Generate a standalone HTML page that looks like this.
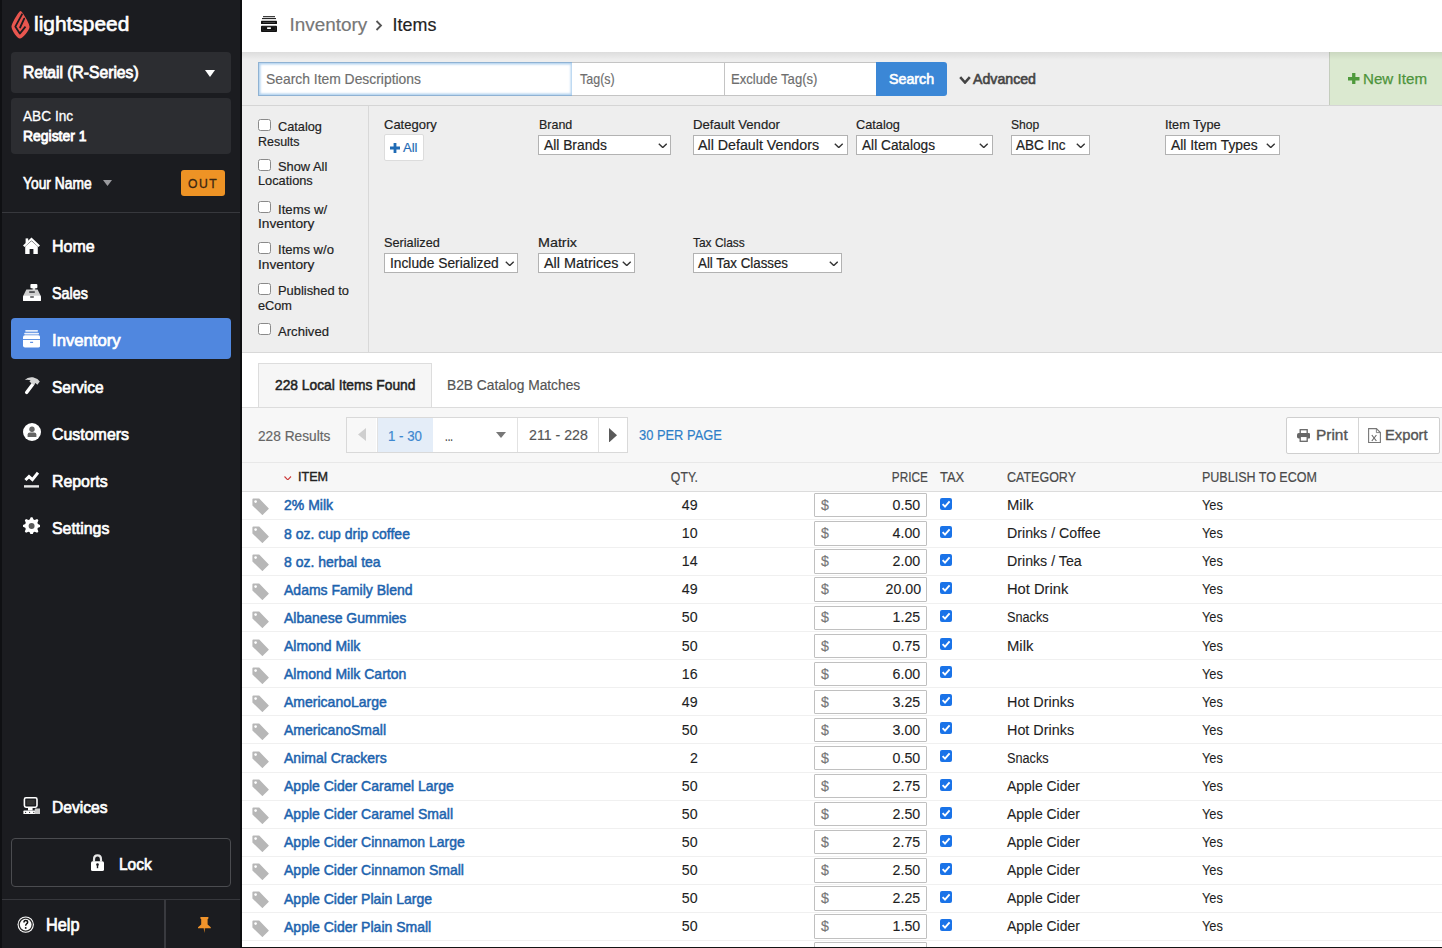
<!DOCTYPE html><html><head><meta charset="utf-8"><style>*{box-sizing:border-box;margin:0;padding:0}
html,body{width:1442px;height:948px;overflow:hidden;background:#fff;font-family:"Liberation Sans",sans-serif;color:#222}
.t{position:absolute;line-height:1;white-space:nowrap;-webkit-text-stroke:0.18px currentColor}
.b{position:absolute}
</style></head><body><div class="b" style="left:242.00px;top:0.00px;width:1200.00px;height:52.00px;background:#fff"></div>
<div class="b" style="left:242.00px;top:52.00px;width:1200.00px;height:54.00px;background:#eeeeee"></div>
<div class="b" style="left:242.00px;top:105.00px;width:1200.00px;height:1.00px;background:#d5d5d5"></div>
<div class="b" style="left:242.00px;top:106.00px;width:1200.00px;height:246.00px;background:#eeeeee"></div>
<div class="b" style="left:368.00px;top:106.00px;width:1.00px;height:246.00px;background:#d8d8d8"></div>
<div class="b" style="left:242.00px;top:352.00px;width:1200.00px;height:1.00px;background:#d8d8d8"></div>
<div class="b" style="left:242.00px;top:353.00px;width:1200.00px;height:55.00px;background:#fff"></div>
<div class="b" style="left:242.00px;top:407.00px;width:1200.00px;height:1.00px;background:#dddddd"></div>
<div class="b" style="left:242.00px;top:408.00px;width:1200.00px;height:54.00px;background:#f7f7f7"></div>
<div class="b" style="left:242.00px;top:462.00px;width:1200.00px;height:29.00px;background:#f7f7f7"></div>
<div class="b" style="left:242.00px;top:462.00px;width:1200.00px;height:1.00px;background:#e8e8e8"></div>
<div class="b" style="left:242.00px;top:490.60px;width:1200.00px;height:1.40px;background:#dcdcdc"></div>
<div class="b" style="left:0.00px;top:0.00px;width:242.00px;height:948.00px;background:#1b1c20"></div>
<div class="b" style="left:0.00px;top:0.00px;width:2.00px;height:948.00px;background:#0f1013"></div>
<div class="b" style="left:240.00px;top:0.00px;width:2.00px;height:948.00px;background:#0d0e10"></div>
<svg class="b" style="left:8.00px;top:8.00px" width="26" height="34" viewBox="0 0 26 34"><path d="M12.6 2.9 C14.2 3.2 21.6 15.2 21.6 18.8 C21.6 22.4 14.6 30.6 11.9 30.6 C9.2 30.6 3.5 22.4 3.5 18.8 C3.5 15.4 11 2.6 12.6 2.9 Z" fill="#e9564f"/><path d="M14.4 5.6 L7.3 18.6 L11.8 25.6 L17.5 18.6" fill="none" stroke="#1b1c20" stroke-width="1.8" stroke-linejoin="round"/><path d="M16.2 10.6 L12.1 19.5" fill="none" stroke="#1b1c20" stroke-width="1.8" stroke-linecap="round"/></svg>
<div class="t" style="left:33.70px;top:14.91px;font-size:19.48px;color:#fff;transform:scaleX(1.0733);transform-origin:left;-webkit-text-stroke:0.60px #fff;">lightspeed</div>
<div class="b" style="left:11.00px;top:52.00px;width:220.00px;height:41.00px;background:#2c2d31;border-radius:4px"></div>
<div class="t" style="left:23.30px;top:64.79px;font-size:15.84px;color:#fff;transform:scaleX(0.9882);transform-origin:left;-webkit-text-stroke:0.80px #fff;">Retail (R-Series)</div>
<svg class="b" style="left:205.00px;top:69.50px" width="10" height="7" viewBox="0 0 10 7"><path d="M0 0 H10 L5 7 Z" fill="#fff"/></svg>
<div class="b" style="left:11.00px;top:98.00px;width:220.00px;height:56.00px;background:#2c2d31;border-radius:4px"></div>
<div class="t" style="left:23.30px;top:108.65px;font-size:14.83px;color:#fff;transform:scaleX(0.9213);transform-origin:left;-webkit-text-stroke:0.30px #fff;">ABC Inc</div>
<div class="t" style="left:23.30px;top:129.23px;font-size:14.97px;color:#fff;transform:scaleX(0.9306);transform-origin:left;-webkit-text-stroke:0.90px #fff;">Register 1</div>
<div class="t" style="left:23.30px;top:175.59px;font-size:15.84px;color:#fff;transform:scaleX(0.8732);transform-origin:left;-webkit-text-stroke:0.67px #fff;">Your Name</div>
<svg class="b" style="left:102.50px;top:180.00px" width="9" height="6" viewBox="0 0 9 6"><path d="M0 0 H9 L4.5 6 Z" fill="#9a9a9e"/></svg>
<div class="b" style="left:181.00px;top:170.00px;width:44.00px;height:25.50px;background:#ee9325;border-radius:3px"></div>
<div class="t" style="left:188.00px;top:177.77px;font-size:12.79px;color:#3a2612;transform:scaleX(0.9503);transform-origin:left;-webkit-text-stroke:0.30px #3a2612;letter-spacing:1.6px;">OUT</div>
<div class="b" style="left:2.00px;top:211.60px;width:238.00px;height:1.60px;background:#37383d"></div>
<div class="b" style="left:11.00px;top:318.00px;width:219.60px;height:40.80px;background:#5087df;border-radius:4px"></div>
<div class="t" style="left:51.80px;top:238.36px;font-size:17.30px;color:#fff;transform:scaleX(0.9253);transform-origin:left;-webkit-text-stroke:0.73px #fff;">Home</div>
<div class="t" style="left:51.80px;top:285.26px;font-size:17.30px;color:#fff;transform:scaleX(0.8299);transform-origin:left;-webkit-text-stroke:0.73px #fff;">Sales</div>
<div class="t" style="left:51.80px;top:332.16px;font-size:17.30px;color:#fff;transform:scaleX(0.9643);transform-origin:left;-webkit-text-stroke:0.73px #fff;">Inventory</div>
<div class="t" style="left:51.80px;top:379.06px;font-size:17.30px;color:#fff;transform:scaleX(0.8963);transform-origin:left;-webkit-text-stroke:0.73px #fff;">Service</div>
<div class="t" style="left:51.80px;top:425.96px;font-size:17.30px;color:#fff;transform:scaleX(0.9219);transform-origin:left;-webkit-text-stroke:0.73px #fff;">Customers</div>
<div class="t" style="left:51.80px;top:472.86px;font-size:17.30px;color:#fff;transform:scaleX(0.9182);transform-origin:left;-webkit-text-stroke:0.73px #fff;">Reports</div>
<div class="t" style="left:51.80px;top:519.76px;font-size:17.30px;color:#fff;transform:scaleX(0.9185);transform-origin:left;-webkit-text-stroke:0.73px #fff;">Settings</div>
<div class="t" style="left:51.50px;top:798.86px;font-size:17.30px;color:#fff;transform:scaleX(0.9021);transform-origin:left;-webkit-text-stroke:0.73px #fff;">Devices</div>
<div class="b" style="left:11.00px;top:838.00px;width:220.00px;height:48.50px;border:1px solid #4b4c50;border-radius:4px"></div>
<div class="t" style="left:118.80px;top:855.96px;font-size:17.30px;color:#fff;transform:scaleX(0.8970);transform-origin:left;-webkit-text-stroke:0.73px #fff;">Lock</div>
<div class="b" style="left:2.00px;top:898.80px;width:238.00px;height:1.50px;background:#37383d"></div>
<div class="b" style="left:163.80px;top:900.00px;width:2.00px;height:48.00px;background:#393a3f"></div>
<div class="t" style="left:45.70px;top:917.29px;font-size:17.73px;color:#fff;transform:scaleX(0.9184);transform-origin:left;-webkit-text-stroke:0.74px #fff;">Help</div>
<svg class="b" style="left:22.80px;top:237.00px" width="17" height="17.2" viewBox="0 0 17 17.2"><path d="M8.5 0.6 L0 8.6 L1.5 10.1 L8.5 3.6 L15.5 10.1 L17 8.6 Z" fill="#fff"/><rect x="2.6" y="1.4" width="2.6" height="4.6" fill="#fff"/><path d="M2.2 9.4 L8.5 3.9 L14.8 9.4 V17.2 H10.4 V12 H6.6 V17.2 H2.2 Z" fill="#fff"/></svg>
<svg class="b" style="left:22.60px;top:283.60px" width="18" height="17.4" viewBox="0 0 18 17.4"><rect x="7.4" y="0" width="7" height="4.2" rx="1" fill="#fff"/><rect x="9.6" y="4" width="2.6" height="2" fill="#e0e0e0"/><path d="M3.4 5.6 H14.6 L17.6 11.4 H0.4 Z" fill="#cfcfcf"/><rect x="6.2" y="7.4" width="5.6" height="1.3" fill="#1b1c20"/><rect x="0" y="11.2" width="18" height="6.2" rx="1.2" fill="#fff"/><rect x="7.2" y="12.4" width="3.6" height="1.2" fill="#1b1c20"/></svg>
<svg class="b" style="left:23.00px;top:330.00px" width="17.2" height="17.5" viewBox="0 0 17.2 17.5"><rect x="2.2" y="0" width="12.8" height="1.7" rx="0.8" fill="#fff" opacity="0.85"/><rect x="1.2" y="2.8" width="14.8" height="1.7" rx="0.8" fill="#fff" opacity="0.9"/><rect x="0" y="5.2" width="17.2" height="12.3" rx="2" fill="#fff"/><rect x="0" y="9.1" width="17.2" height="0.9" fill="#5087df"/><rect x="7.1" y="11.8" width="3" height="1.1" fill="#5087df"/></svg>
<svg class="b" style="left:23.80px;top:377.30px" width="16" height="17.5" viewBox="0 0 16 17.5"><path d="M2.6 15.4 L8.8 7.2" stroke="#fff" stroke-width="3.3" stroke-linecap="round"/><path d="M0.8 3 Q3.6 -0.4 9 0.3 L13.4 2 L15.8 4.4 L13.4 7.8 L11.4 6 L9.8 8.2 L5.4 4.6 L6.6 3.3 Q3.8 2.4 0.8 3 Z" fill="#d4d4d4"/></svg>
<svg class="b" style="left:22.50px;top:423.20px" width="18" height="18" viewBox="0 0 18 18"><circle cx="9" cy="9" r="9" fill="#fff"/><circle cx="9" cy="6.2" r="2.7" fill="#666"/><path d="M4.6 14 V11.6 Q4.6 9.4 7 9.4 H11 Q13.4 9.4 13.4 11.6 V14 Z" fill="#666"/></svg>
<svg class="b" style="left:23.80px;top:471.30px" width="15.4" height="17.2" viewBox="0 0 15.4 17.2"><path d="M1.4 9 L5 5.6 L8.4 8.6 L14 1.6" fill="none" stroke="#fff" stroke-width="3" stroke-linejoin="miter"/><rect x="0" y="14.2" width="15.4" height="2.4" fill="#e8e8e8"/></svg>
<svg class="b" style="left:22.50px;top:516.60px" width="17.2" height="17.8" viewBox="0 0 17.2 17.8"><path d="M17.36 8.04 L17.36 9.76 L14.92 10.82 L14.42 12.01 L15.40 14.48 L14.18 15.70 L11.71 14.72 L10.52 15.22 L9.46 17.66 L7.74 17.66 L6.68 15.22 L5.49 14.72 L3.02 15.70 L1.80 14.48 L2.78 12.01 L2.28 10.82 L-0.16 9.76 L-0.16 8.04 L2.28 6.98 L2.78 5.79 L1.80 3.32 L3.02 2.10 L5.49 3.08 L6.68 2.58 L7.74 0.14 L9.46 0.14 L10.52 2.58 L11.71 3.08 L14.18 2.10 L15.40 3.32 L14.42 5.79 L14.92 6.98 Z" fill="#fff"/><circle cx="8.6" cy="8.9" r="3" fill="#5a5a5a"/></svg>
<svg class="b" style="left:22.60px;top:796.80px" width="17.6" height="17.6" viewBox="0 0 17.6 17.6"><rect x="1.4" y="0.8" width="12.6" height="9.4" rx="1.6" fill="none" stroke="#fff" stroke-width="1.6"/><rect x="3.6" y="3" width="8.2" height="5" fill="#333"/><rect x="5" y="10" width="4.6" height="3.4" fill="#fff"/><rect x="0.4" y="13.6" width="12.4" height="3.8" rx="0.6" fill="#fff"/><rect x="11.8" y="11.6" width="5.6" height="5.8" rx="0.6" fill="#ccc"/><circle cx="2.6" cy="15.4" r="0.6" fill="#333"/><circle cx="6.6" cy="15.4" r="0.6" fill="#333"/><circle cx="10.8" cy="15.4" r="0.6" fill="#333"/></svg>
<svg class="b" style="left:91.30px;top:854.00px" width="13" height="17" viewBox="0 0 13 17"><path d="M3 7.6 V5.4 Q3 1.4 6.5 1.4 Q10 1.4 10 5.4 V7.6" fill="none" stroke="#e6e6e6" stroke-width="2.2"/><rect x="0" y="7.2" width="13" height="9.8" rx="1.6" fill="#fff"/><circle cx="6.5" cy="10.6" r="1.3" fill="#1b1c20"/><rect x="5.8" y="10.8" width="1.4" height="3.4" fill="#1b1c20"/></svg>
<svg class="b" style="left:16.60px;top:915.80px" width="17.4" height="17.2" viewBox="0 0 17.4 17.2"><circle cx="8.7" cy="8.6" r="8.2" fill="#fff"/><circle cx="8.7" cy="8.6" r="6.5" fill="none" stroke="#2a2a2a" stroke-width="1.3"/><path d="M6.2 6.6 Q6.2 3.8 8.8 3.8 Q11.4 3.8 11.4 6.3 Q11.4 7.6 10 8.4 Q9.4 8.8 9.4 9.8 H8 Q8 8.2 9 7.5 Q9.9 6.9 9.9 6.3 Q9.9 5.2 8.8 5.2 Q7.7 5.2 7.7 6.6 Z" fill="#111"/><circle cx="8.7" cy="11.9" r="0.95" fill="#111"/></svg>
<svg class="b" style="left:197.90px;top:917.40px" width="12.8" height="16" viewBox="0 0 12.8 16"><path d="M2.4 0 H10.4 V1.6 L9.6 2.2 V7.4 L12.8 10.2 V11.2 H0 V10.2 L3.2 7.4 V2.2 L2.4 1.6 Z" fill="#f0932b"/><path d="M5.6 11 H7.2 L6.4 16 Z" fill="#c77a22"/></svg>
<svg class="b" style="left:261.20px;top:15.90px" width="16" height="16.2" viewBox="0 0 16 16.2"><rect x="2" y="0.2" width="12" height="1" fill="#111"/><rect x="1" y="2.1" width="14" height="1" fill="#111"/><rect x="0" y="4.8" width="16" height="3.2" rx="0.6" fill="#111"/><rect x="0" y="9.8" width="16" height="6.2" rx="0.8" fill="#111"/><rect x="6" y="11.3" width="4" height="1.6" rx="0.6" fill="#fff"/><rect x="1.8" y="6.1" width="12.4" height="0.6" fill="#666"/><rect x="1.9" y="10.9" width="12.2" height="3.9" fill="none" stroke="#444" stroke-width="0.4"/></svg>
<div class="t" style="left:289.60px;top:15.90px;font-size:18.9px;color:#777;font-weight:normal;">Inventory</div>
<svg class="b" style="left:375.00px;top:19.50px" width="8" height="11" viewBox="0 0 8 11"><path d="M1.5 1 L6 5.5 L1.5 10" fill="none" stroke="#555" stroke-width="1.8"/></svg>
<div class="t" style="left:392.60px;top:16.75px;font-size:17.9px;color:#222;font-weight:normal;">Items</div>
<div class="b" style="left:257.50px;top:62.00px;width:315.50px;height:34.20px;background:#fff;border:1px solid #8fb2d3;box-shadow:inset 0 0 2px 1.5px #b3d3f0"></div>
<div class="t" style="left:266.00px;top:71.10px;font-size:15.12px;color:#6e6e6e;transform:scaleX(0.9179);transform-origin:left;">Search Item Descriptions</div>
<div class="b" style="left:572.00px;top:62.00px;width:153.00px;height:34.20px;background:#fff;border:1px solid #c4c4c4;border-left:none"></div>
<div class="t" style="left:579.80px;top:70.90px;font-size:15.12px;color:#6e6e6e;transform:scaleX(0.8263);transform-origin:left;">Tag(s)</div>
<div class="b" style="left:724.00px;top:62.00px;width:153.00px;height:34.20px;background:#fff;border:1px solid #c4c4c4"></div>
<div class="t" style="left:731.00px;top:70.90px;font-size:15.12px;color:#6e6e6e;transform:scaleX(0.8675);transform-origin:left;">Exclude Tag(s)</div>
<div class="b" style="left:876.00px;top:62.00px;width:71.00px;height:34.20px;background:#3b87d6;border-radius:0 3px 3px 0"></div>
<div class="t" style="left:888.60px;top:71.48px;font-size:15.26px;color:#fff;transform:scaleX(0.9349);transform-origin:left;-webkit-text-stroke:0.64px #fff;">Search</div>
<svg class="b" style="left:959.40px;top:75.50px" width="12" height="8.5" viewBox="0 0 12 8.5"><path d="M1.2 1.2 L6 6.5 L10.8 1.2" fill="none" stroke="#444" stroke-width="2.6"/></svg>
<div class="t" style="left:973.20px;top:71.63px;font-size:14.97px;color:#444;transform:scaleX(0.9461);transform-origin:left;-webkit-text-stroke:0.63px #444;">Advanced</div>
<div class="b" style="left:1329.00px;top:52.00px;width:113.00px;height:53.50px;background:#dbe9d0;border-left:1px solid #c4cdbd"></div>
<div class="b" style="left:242.00px;top:52.00px;width:1200.00px;height:8.00px;background:linear-gradient(rgba(0,0,0,0.075),rgba(0,0,0,0))"></div>
<div class="b" style="left:242.00px;top:105.00px;width:1200.00px;height:1.00px;background:#d5d5d5"></div>
<div class="t" style="left:1363.20px;top:70.76px;font-size:15.41px;color:#4d943b;transform:scaleX(0.9837);transform-origin:left;-webkit-text-stroke:0.25px #4d943b;">New Item</div>
<svg class="b" style="left:1348.00px;top:72.60px" width="11.5" height="11.5" viewBox="0 0 11.5 11.5"><path d="M4.1 0 H7.4 V4.1 H11.5 V7.4 H7.4 V11.5 H4.1 V7.4 H0 V4.1 H4.1 Z" fill="#4f9a3c"/></svg>
<div class="t" style="left:384.40px;top:117.73px;font-size:13.2px;color:#222;font-weight:normal;transform:scaleX(0.9857);transform-origin:left;">Category</div>
<div class="t" style="left:539.10px;top:117.73px;font-size:13.2px;color:#222;font-weight:normal;transform:scaleX(0.9455);transform-origin:left;">Brand</div>
<div class="t" style="left:693.20px;top:117.73px;font-size:13.2px;color:#222;font-weight:normal;transform:scaleX(0.9962);transform-origin:left;">Default Vendor</div>
<div class="t" style="left:856.20px;top:117.73px;font-size:13.2px;color:#222;font-weight:normal;transform:scaleX(0.9670);transform-origin:left;">Catalog</div>
<div class="t" style="left:1010.70px;top:117.73px;font-size:13.2px;color:#222;font-weight:normal;transform:scaleX(0.9182);transform-origin:left;">Shop</div>
<div class="t" style="left:1165.40px;top:117.73px;font-size:13.2px;color:#222;font-weight:normal;transform:scaleX(0.9649);transform-origin:left;">Item Type</div>
<div class="b" style="left:384.40px;top:134.40px;width:39.30px;height:26.20px;background:#fff;border:1px solid #dcdcdc;border-radius:2px"></div>
<svg class="b" style="left:390.00px;top:142.80px" width="10" height="10" viewBox="0 0 10 10"><path d="M3.6 0 H6.4 V3.6 H10 V6.4 H6.4 V10 H3.6 V6.4 H0 V3.6 H3.6 Z" fill="#1f6bb5"/></svg>
<div class="t" style="left:402.80px;top:141.17px;font-size:13.5px;color:#1f6bb5;font-weight:normal;transform:scaleX(0.9668);transform-origin:left;">All</div>
<div class="b" style="left:538.20px;top:135.30px;width:133.20px;height:19.70px;background:#fff;border:1px solid #b2b2b2"></div>
<div class="t" style="left:543.50px;top:138.05px;font-size:14px;color:#222;font-weight:normal;transform:scaleX(0.9857);transform-origin:left;">All Brands</div>
<svg class="b" style="left:657.90px;top:142.90px" width="9.5" height="5.5" viewBox="0 0 9.5 5.5"><path d="M0.8 0.8 L4.75 4.6 L8.7 0.8" fill="none" stroke="#333" stroke-width="1.35"/></svg>
<div class="b" style="left:693.00px;top:135.30px;width:154.60px;height:19.70px;background:#fff;border:1px solid #b2b2b2"></div>
<div class="t" style="left:698.30px;top:138.05px;font-size:14px;color:#222;font-weight:normal;transform:scaleX(1.0162);transform-origin:left;">All Default Vendors</div>
<svg class="b" style="left:834.10px;top:142.90px" width="9.5" height="5.5" viewBox="0 0 9.5 5.5"><path d="M0.8 0.8 L4.75 4.6 L8.7 0.8" fill="none" stroke="#333" stroke-width="1.35"/></svg>
<div class="b" style="left:856.20px;top:135.30px;width:136.40px;height:19.70px;background:#fff;border:1px solid #b2b2b2"></div>
<div class="t" style="left:861.50px;top:138.05px;font-size:14px;color:#222;font-weight:normal;transform:scaleX(0.9772);transform-origin:left;">All Catalogs</div>
<svg class="b" style="left:979.10px;top:142.90px" width="9.5" height="5.5" viewBox="0 0 9.5 5.5"><path d="M0.8 0.8 L4.75 4.6 L8.7 0.8" fill="none" stroke="#333" stroke-width="1.35"/></svg>
<div class="b" style="left:1010.70px;top:135.30px;width:79.00px;height:19.70px;background:#fff;border:1px solid #b2b2b2"></div>
<div class="t" style="left:1016.00px;top:138.05px;font-size:14px;color:#222;font-weight:normal;transform:scaleX(0.9659);transform-origin:left;">ABC Inc</div>
<svg class="b" style="left:1076.20px;top:142.90px" width="9.5" height="5.5" viewBox="0 0 9.5 5.5"><path d="M0.8 0.8 L4.75 4.6 L8.7 0.8" fill="none" stroke="#333" stroke-width="1.35"/></svg>
<div class="b" style="left:1165.40px;top:135.30px;width:114.20px;height:19.70px;background:#fff;border:1px solid #b2b2b2"></div>
<div class="t" style="left:1170.70px;top:138.05px;font-size:14px;color:#222;font-weight:normal;transform:scaleX(0.9878);transform-origin:left;">All Item Types</div>
<svg class="b" style="left:1266.10px;top:142.90px" width="9.5" height="5.5" viewBox="0 0 9.5 5.5"><path d="M0.8 0.8 L4.75 4.6 L8.7 0.8" fill="none" stroke="#333" stroke-width="1.35"/></svg>
<div class="t" style="left:384.20px;top:235.63px;font-size:13.2px;color:#222;font-weight:normal;transform:scaleX(0.9627);transform-origin:left;">Serialized</div>
<div class="t" style="left:538.20px;top:235.63px;font-size:13.2px;color:#222;font-weight:normal;transform:scaleX(1.0854);transform-origin:left;">Matrix</div>
<div class="t" style="left:693.20px;top:235.63px;font-size:13.2px;color:#222;font-weight:normal;transform:scaleX(0.9055);transform-origin:left;">Tax Class</div>
<div class="b" style="left:384.20px;top:253.20px;width:134.30px;height:19.70px;background:#fff;border:1px solid #b2b2b2"></div>
<div class="t" style="left:389.50px;top:255.95px;font-size:14px;color:#222;font-weight:normal;transform:scaleX(0.9836);transform-origin:left;">Include Serialized</div>
<svg class="b" style="left:505.00px;top:260.80px" width="9.5" height="5.5" viewBox="0 0 9.5 5.5"><path d="M0.8 0.8 L4.75 4.6 L8.7 0.8" fill="none" stroke="#333" stroke-width="1.35"/></svg>
<div class="b" style="left:538.20px;top:253.20px;width:97.30px;height:19.70px;background:#fff;border:1px solid #b2b2b2"></div>
<div class="t" style="left:543.50px;top:255.95px;font-size:14px;color:#222;font-weight:normal;transform:scaleX(1.0283);transform-origin:left;">All Matrices</div>
<svg class="b" style="left:622.00px;top:260.80px" width="9.5" height="5.5" viewBox="0 0 9.5 5.5"><path d="M0.8 0.8 L4.75 4.6 L8.7 0.8" fill="none" stroke="#333" stroke-width="1.35"/></svg>
<div class="b" style="left:693.00px;top:253.20px;width:149.00px;height:19.70px;background:#fff;border:1px solid #b2b2b2"></div>
<div class="t" style="left:698.30px;top:255.95px;font-size:14px;color:#222;font-weight:normal;transform:scaleX(0.9507);transform-origin:left;">All Tax Classes</div>
<svg class="b" style="left:828.50px;top:260.80px" width="9.5" height="5.5" viewBox="0 0 9.5 5.5"><path d="M0.8 0.8 L4.75 4.6 L8.7 0.8" fill="none" stroke="#333" stroke-width="1.35"/></svg>
<div class="b" style="left:258.30px;top:118.90px;width:12.40px;height:12.20px;background:#fff;border:1px solid #8a8a8a;border-radius:2.5px"></div>
<div class="t" style="left:277.50px;top:120.23px;font-size:13.2px;color:#222;font-weight:normal;transform:scaleX(0.9670);transform-origin:left;">Catalog</div>
<div class="t" style="left:257.80px;top:134.53px;font-size:13.2px;color:#222;font-weight:normal;transform:scaleX(0.9453);transform-origin:left;">Results</div>
<div class="b" style="left:258.30px;top:158.80px;width:12.40px;height:12.20px;background:#fff;border:1px solid #8a8a8a;border-radius:2.5px"></div>
<div class="t" style="left:277.50px;top:160.13px;font-size:13.2px;color:#222;font-weight:normal;transform:scaleX(0.9739);transform-origin:left;">Show All</div>
<div class="t" style="left:257.80px;top:174.43px;font-size:13.2px;color:#222;font-weight:normal;transform:scaleX(0.9698);transform-origin:left;">Locations</div>
<div class="b" style="left:258.30px;top:201.20px;width:12.40px;height:12.20px;background:#fff;border:1px solid #8a8a8a;border-radius:2.5px"></div>
<div class="t" style="left:277.50px;top:202.53px;font-size:13.2px;color:#222;font-weight:normal;transform:scaleX(1.0011);transform-origin:left;">Items w/</div>
<div class="t" style="left:257.80px;top:216.83px;font-size:13.2px;color:#222;font-weight:normal;transform:scaleX(1.0407);transform-origin:left;">Inventory</div>
<div class="b" style="left:258.30px;top:242.00px;width:12.40px;height:12.20px;background:#fff;border:1px solid #8a8a8a;border-radius:2.5px"></div>
<div class="t" style="left:277.50px;top:243.33px;font-size:13.2px;color:#222;font-weight:normal;transform:scaleX(0.9915);transform-origin:left;">Items w/o</div>
<div class="t" style="left:257.80px;top:257.63px;font-size:13.2px;color:#222;font-weight:normal;transform:scaleX(1.0407);transform-origin:left;">Inventory</div>
<div class="b" style="left:258.30px;top:283.10px;width:12.40px;height:12.20px;background:#fff;border:1px solid #8a8a8a;border-radius:2.5px"></div>
<div class="t" style="left:277.50px;top:284.43px;font-size:13.2px;color:#222;font-weight:normal;transform:scaleX(0.9773);transform-origin:left;">Published to</div>
<div class="t" style="left:257.80px;top:298.73px;font-size:13.2px;color:#222;font-weight:normal;transform:scaleX(0.9654);transform-origin:left;">eCom</div>
<div class="b" style="left:258.30px;top:323.30px;width:12.40px;height:12.20px;background:#fff;border:1px solid #8a8a8a;border-radius:2.5px"></div>
<div class="t" style="left:277.50px;top:324.63px;font-size:13.2px;color:#222;font-weight:normal;transform:scaleX(0.9930);transform-origin:left;">Archived</div>
<div class="b" style="left:258.10px;top:363.30px;width:173.60px;height:44.70px;background:#f6f6f6;border:1px solid #dddddd;border-bottom:none"></div>
<div class="b" style="left:242.00px;top:406.80px;width:1200.00px;height:1.20px;background:#dcdcdc"></div>
<div class="t" style="left:274.50px;top:377.90px;font-size:14.53px;color:#222;transform:scaleX(0.9509);transform-origin:left;-webkit-text-stroke:0.50px #222;">228 Local Items Found</div>
<div class="t" style="left:447.40px;top:377.90px;font-size:14.53px;color:#555;transform:scaleX(0.9489);transform-origin:left;">B2B Catalog Matches</div>
<div class="t" style="left:258.10px;top:428.55px;font-size:14px;color:#666;font-weight:normal;transform:scaleX(0.9793);transform-origin:left;">228 Results</div>
<div class="b" style="left:346.40px;top:417.40px;width:282.00px;height:36.10px;background:#fff;border:1px solid #d9d9d9"></div>
<div class="b" style="left:347.40px;top:418.40px;width:29.10px;height:34.10px;background:#f8f8f8"></div>
<div class="b" style="left:376.50px;top:418.40px;width:1.00px;height:34.10px;background:#e2e2e2"></div>
<div class="b" style="left:377.50px;top:418.40px;width:55.10px;height:34.10px;background:#e4edf8"></div>
<svg class="b" style="left:358.20px;top:428.20px" width="8" height="13" viewBox="0 0 8 13"><path d="M8 0 V13 L0 6.5 Z" fill="#cfcfcf"/></svg>
<div class="t" style="left:388.10px;top:428.55px;font-size:14px;color:#3e88d0;font-weight:normal;transform:scaleX(0.9498);transform-origin:left;">1 - 30</div>
<div class="t" style="left:445.40px;top:428.55px;font-size:14px;color:#333;font-weight:normal;transform:scaleX(0.6860);transform-origin:left;">...</div>
<svg class="b" style="left:496.00px;top:431.50px" width="10" height="6" viewBox="0 0 10 6"><path d="M0 0 H10 L5 6 Z" fill="#777"/></svg>
<div class="b" style="left:517.00px;top:418.40px;width:1.00px;height:34.10px;background:#e2e2e2"></div>
<div class="t" style="left:528.50px;top:427.75px;font-size:14px;color:#555;font-weight:normal;transform:scaleX(1.0118);transform-origin:left;">211 - 228</div>
<div class="b" style="left:598.00px;top:418.40px;width:1.00px;height:34.10px;background:#e2e2e2"></div>
<svg class="b" style="left:608.90px;top:427.50px" width="8" height="14.5" viewBox="0 0 8 14.5"><path d="M0 0 V14.5 L8 7.25 Z" fill="#5a5a5a"/></svg>
<div class="t" style="left:638.50px;top:427.55px;font-size:14px;color:#2f7fc8;font-weight:normal;transform:scaleX(0.9210);transform-origin:left;">30 PER PAGE</div>
<div class="b" style="left:1286.00px;top:417.00px;width:153.80px;height:36.60px;background:#fff;border:1px solid #cfcfcf;border-radius:2px"></div>
<div class="b" style="left:1358.00px;top:418.00px;width:1.00px;height:35.00px;background:#d5d5d5"></div>
<div class="t" style="left:1315.80px;top:427.65px;font-size:14.83px;color:#555;transform:scaleX(1.0400);transform-origin:left;-webkit-text-stroke:0.35px #555;">Print</div>
<div class="t" style="left:1385.40px;top:427.65px;font-size:14.83px;color:#555;transform:scaleX(0.9943);transform-origin:left;-webkit-text-stroke:0.35px #555;">Export</div>
<svg class="b" style="left:1297.00px;top:428.80px" width="13.4" height="13" viewBox="0 0 13.4 13"><rect x="3.2" y="0.7" width="7" height="4" fill="none" stroke="#666" stroke-width="1.3"/><rect x="0" y="4" width="13.4" height="5.6" rx="1.8" fill="#666"/><rect x="3.2" y="7.4" width="7" height="4.9" fill="#fff" stroke="#666" stroke-width="1.3"/></svg>
<svg class="b" style="left:1368.00px;top:427.80px" width="13" height="15.2" viewBox="0 0 13 15.2"><path d="M0.6 0.6 H8.4 L12.4 4.6 V14.6 H0.6 Z" fill="none" stroke="#777" stroke-width="1.1"/><path d="M8.4 0.6 V4.6 H12.4" fill="none" stroke="#777" stroke-width="0.9"/><path d="M3.8 7 L8.4 13 M8.4 7 L3.8 13" stroke="#666" stroke-width="1.1"/></svg>
<svg class="b" style="left:284.00px;top:475.50px" width="7.5" height="4.5" viewBox="0 0 7.5 4.5"><path d="M0.5 0.5 L3.75 3.9 L7 0.5" fill="none" stroke="#cc3b3b" stroke-width="1.1"/></svg>
<div class="t" style="left:297.80px;top:470.46px;font-size:13.52px;color:#222;transform:scaleX(0.9321);transform-origin:left;-webkit-text-stroke:0.40px #222;">ITEM</div>
<div class="t" style="right:743.80px;top:470.05px;font-size:14px;color:#4a4a4a;font-weight:normal;transform:scaleX(0.8746);transform-origin:right;">QTY.</div>
<div class="t" style="right:514.50px;top:470.05px;font-size:14px;color:#4a4a4a;font-weight:normal;transform:scaleX(0.8414);transform-origin:right;">PRICE</div>
<div class="t" style="left:940.20px;top:470.05px;font-size:14px;color:#4a4a4a;font-weight:normal;transform:scaleX(0.9239);transform-origin:left;">TAX</div>
<div class="t" style="left:1007.20px;top:470.05px;font-size:14px;color:#4a4a4a;font-weight:normal;transform:scaleX(0.8929);transform-origin:left;">CATEGORY</div>
<div class="t" style="left:1202.30px;top:470.05px;font-size:14px;color:#4a4a4a;font-weight:normal;transform:scaleX(0.8932);transform-origin:left;">PUBLISH TO ECOM</div>
<div class="b" style="left:242.00px;top:518.78px;width:1200.00px;height:1.00px;background:#f0f0f0"></div>
<svg class="b" style="left:252.00px;top:498.30px" width="17.4" height="17.6" viewBox="0 0 17.4 17.6"><path d="M0.4 1.6 Q0.4 0.6 1.4 0.6 H7.2 L16.6 10.2 Q17 10.6 16.6 11 L10.8 16.8 Q10.4 17.2 10 16.8 L0.4 7.4 Z" fill="#b7b7b7"/><circle cx="3.6" cy="3.6" r="1.3" fill="#fff"/></svg>
<div class="t" style="left:283.60px;top:498.44px;font-size:14.6px;color:#1c63ae;font-weight:normal;transform:scaleX(0.9603);transform-origin:left;-webkit-text-stroke:0.5px #1c63ae">2% Milk</div>
<div class="t" style="right:744.70px;top:498.15px;font-size:14px;color:#1e1e1e;font-weight:normal;transform:scaleX(1.0138);transform-origin:right;-webkit-text-stroke:0.1px #1e1e1e">49</div>
<div class="t" style="left:1007.20px;top:498.15px;font-size:14px;color:#1e1e1e;font-weight:normal;transform:scaleX(1.0600);transform-origin:left;-webkit-text-stroke:0.1px #1e1e1e">Milk</div>
<div class="t" style="left:1201.80px;top:498.15px;font-size:14px;color:#1e1e1e;font-weight:normal;transform:scaleX(0.9109);transform-origin:left;-webkit-text-stroke:0.1px #1e1e1e">Yes</div>
<div class="b" style="left:814.30px;top:493.20px;width:113.10px;height:24.30px;background:#fff;border:1px solid #c0c0c0;border-radius:1px"></div>
<div class="t" style="left:820.60px;top:498.15px;font-size:14px;color:#777;font-weight:normal;transform:scaleX(1.0138);transform-origin:left;">$</div>
<div class="t" style="right:521.30px;top:498.15px;font-size:14px;color:#1e1e1e;font-weight:normal;transform:scaleX(1.0138);transform-origin:right;-webkit-text-stroke:0.1px #1e1e1e">0.50</div>
<svg class="b" style="left:940.00px;top:497.70px" width="12" height="12" viewBox="0 0 12 12"><rect x="0" y="0" width="12" height="12" rx="2" fill="#1a73e8"/><path d="M2.6 6.2 L5 8.6 L9.6 3.4" fill="none" stroke="#fff" stroke-width="1.9"/></svg>
<div class="b" style="left:242.00px;top:546.86px;width:1200.00px;height:1.00px;background:#f0f0f0"></div>
<svg class="b" style="left:252.00px;top:526.38px" width="17.4" height="17.6" viewBox="0 0 17.4 17.6"><path d="M0.4 1.6 Q0.4 0.6 1.4 0.6 H7.2 L16.6 10.2 Q17 10.6 16.6 11 L10.8 16.8 Q10.4 17.2 10 16.8 L0.4 7.4 Z" fill="#b7b7b7"/><circle cx="3.6" cy="3.6" r="1.3" fill="#fff"/></svg>
<div class="t" style="left:283.60px;top:526.52px;font-size:14.6px;color:#1c63ae;font-weight:normal;transform:scaleX(0.9603);transform-origin:left;-webkit-text-stroke:0.5px #1c63ae">8 oz. cup drip coffee</div>
<div class="t" style="right:744.70px;top:526.23px;font-size:14px;color:#1e1e1e;font-weight:normal;transform:scaleX(1.0138);transform-origin:right;-webkit-text-stroke:0.1px #1e1e1e">10</div>
<div class="t" style="left:1007.20px;top:526.23px;font-size:14px;color:#1e1e1e;font-weight:normal;transform:scaleX(1.0138);transform-origin:left;-webkit-text-stroke:0.1px #1e1e1e">Drinks / Coffee</div>
<div class="t" style="left:1201.80px;top:526.23px;font-size:14px;color:#1e1e1e;font-weight:normal;transform:scaleX(0.9109);transform-origin:left;-webkit-text-stroke:0.1px #1e1e1e">Yes</div>
<div class="b" style="left:814.30px;top:521.28px;width:113.10px;height:24.30px;background:#fff;border:1px solid #c0c0c0;border-radius:1px"></div>
<div class="t" style="left:820.60px;top:526.23px;font-size:14px;color:#777;font-weight:normal;transform:scaleX(1.0138);transform-origin:left;">$</div>
<div class="t" style="right:521.30px;top:526.23px;font-size:14px;color:#1e1e1e;font-weight:normal;transform:scaleX(1.0138);transform-origin:right;-webkit-text-stroke:0.1px #1e1e1e">4.00</div>
<svg class="b" style="left:940.00px;top:525.78px" width="12" height="12" viewBox="0 0 12 12"><rect x="0" y="0" width="12" height="12" rx="2" fill="#1a73e8"/><path d="M2.6 6.2 L5 8.6 L9.6 3.4" fill="none" stroke="#fff" stroke-width="1.9"/></svg>
<div class="b" style="left:242.00px;top:574.94px;width:1200.00px;height:1.00px;background:#f0f0f0"></div>
<svg class="b" style="left:252.00px;top:554.46px" width="17.4" height="17.6" viewBox="0 0 17.4 17.6"><path d="M0.4 1.6 Q0.4 0.6 1.4 0.6 H7.2 L16.6 10.2 Q17 10.6 16.6 11 L10.8 16.8 Q10.4 17.2 10 16.8 L0.4 7.4 Z" fill="#b7b7b7"/><circle cx="3.6" cy="3.6" r="1.3" fill="#fff"/></svg>
<div class="t" style="left:283.60px;top:554.60px;font-size:14.6px;color:#1c63ae;font-weight:normal;transform:scaleX(0.9603);transform-origin:left;-webkit-text-stroke:0.5px #1c63ae">8 oz. herbal tea</div>
<div class="t" style="right:744.70px;top:554.31px;font-size:14px;color:#1e1e1e;font-weight:normal;transform:scaleX(1.0138);transform-origin:right;-webkit-text-stroke:0.1px #1e1e1e">14</div>
<div class="t" style="left:1007.20px;top:554.31px;font-size:14px;color:#1e1e1e;font-weight:normal;transform:scaleX(1.0138);transform-origin:left;-webkit-text-stroke:0.1px #1e1e1e">Drinks / Tea</div>
<div class="t" style="left:1201.80px;top:554.31px;font-size:14px;color:#1e1e1e;font-weight:normal;transform:scaleX(0.9109);transform-origin:left;-webkit-text-stroke:0.1px #1e1e1e">Yes</div>
<div class="b" style="left:814.30px;top:549.36px;width:113.10px;height:24.30px;background:#fff;border:1px solid #c0c0c0;border-radius:1px"></div>
<div class="t" style="left:820.60px;top:554.31px;font-size:14px;color:#777;font-weight:normal;transform:scaleX(1.0138);transform-origin:left;">$</div>
<div class="t" style="right:521.30px;top:554.31px;font-size:14px;color:#1e1e1e;font-weight:normal;transform:scaleX(1.0138);transform-origin:right;-webkit-text-stroke:0.1px #1e1e1e">2.00</div>
<svg class="b" style="left:940.00px;top:553.86px" width="12" height="12" viewBox="0 0 12 12"><rect x="0" y="0" width="12" height="12" rx="2" fill="#1a73e8"/><path d="M2.6 6.2 L5 8.6 L9.6 3.4" fill="none" stroke="#fff" stroke-width="1.9"/></svg>
<div class="b" style="left:242.00px;top:603.02px;width:1200.00px;height:1.00px;background:#f0f0f0"></div>
<svg class="b" style="left:252.00px;top:582.54px" width="17.4" height="17.6" viewBox="0 0 17.4 17.6"><path d="M0.4 1.6 Q0.4 0.6 1.4 0.6 H7.2 L16.6 10.2 Q17 10.6 16.6 11 L10.8 16.8 Q10.4 17.2 10 16.8 L0.4 7.4 Z" fill="#b7b7b7"/><circle cx="3.6" cy="3.6" r="1.3" fill="#fff"/></svg>
<div class="t" style="left:283.60px;top:582.68px;font-size:14.6px;color:#1c63ae;font-weight:normal;transform:scaleX(0.9603);transform-origin:left;-webkit-text-stroke:0.5px #1c63ae">Adams Family Blend</div>
<div class="t" style="right:744.70px;top:582.39px;font-size:14px;color:#1e1e1e;font-weight:normal;transform:scaleX(1.0138);transform-origin:right;-webkit-text-stroke:0.1px #1e1e1e">49</div>
<div class="t" style="left:1007.20px;top:582.39px;font-size:14px;color:#1e1e1e;font-weight:normal;transform:scaleX(1.0500);transform-origin:left;-webkit-text-stroke:0.1px #1e1e1e">Hot Drink</div>
<div class="t" style="left:1201.80px;top:582.39px;font-size:14px;color:#1e1e1e;font-weight:normal;transform:scaleX(0.9109);transform-origin:left;-webkit-text-stroke:0.1px #1e1e1e">Yes</div>
<div class="b" style="left:814.30px;top:577.44px;width:113.10px;height:24.30px;background:#fff;border:1px solid #c0c0c0;border-radius:1px"></div>
<div class="t" style="left:820.60px;top:582.39px;font-size:14px;color:#777;font-weight:normal;transform:scaleX(1.0138);transform-origin:left;">$</div>
<div class="t" style="right:521.30px;top:582.39px;font-size:14px;color:#1e1e1e;font-weight:normal;transform:scaleX(1.0138);transform-origin:right;-webkit-text-stroke:0.1px #1e1e1e">20.00</div>
<svg class="b" style="left:940.00px;top:581.94px" width="12" height="12" viewBox="0 0 12 12"><rect x="0" y="0" width="12" height="12" rx="2" fill="#1a73e8"/><path d="M2.6 6.2 L5 8.6 L9.6 3.4" fill="none" stroke="#fff" stroke-width="1.9"/></svg>
<div class="b" style="left:242.00px;top:631.10px;width:1200.00px;height:1.00px;background:#f0f0f0"></div>
<svg class="b" style="left:252.00px;top:610.62px" width="17.4" height="17.6" viewBox="0 0 17.4 17.6"><path d="M0.4 1.6 Q0.4 0.6 1.4 0.6 H7.2 L16.6 10.2 Q17 10.6 16.6 11 L10.8 16.8 Q10.4 17.2 10 16.8 L0.4 7.4 Z" fill="#b7b7b7"/><circle cx="3.6" cy="3.6" r="1.3" fill="#fff"/></svg>
<div class="t" style="left:283.60px;top:610.76px;font-size:14.6px;color:#1c63ae;font-weight:normal;transform:scaleX(0.9603);transform-origin:left;-webkit-text-stroke:0.5px #1c63ae">Albanese Gummies</div>
<div class="t" style="right:744.70px;top:610.47px;font-size:14px;color:#1e1e1e;font-weight:normal;transform:scaleX(1.0138);transform-origin:right;-webkit-text-stroke:0.1px #1e1e1e">50</div>
<div class="t" style="left:1007.20px;top:610.47px;font-size:14px;color:#1e1e1e;font-weight:normal;transform:scaleX(0.9062);transform-origin:left;-webkit-text-stroke:0.1px #1e1e1e">Snacks</div>
<div class="t" style="left:1201.80px;top:610.47px;font-size:14px;color:#1e1e1e;font-weight:normal;transform:scaleX(0.9109);transform-origin:left;-webkit-text-stroke:0.1px #1e1e1e">Yes</div>
<div class="b" style="left:814.30px;top:605.52px;width:113.10px;height:24.30px;background:#fff;border:1px solid #c0c0c0;border-radius:1px"></div>
<div class="t" style="left:820.60px;top:610.47px;font-size:14px;color:#777;font-weight:normal;transform:scaleX(1.0138);transform-origin:left;">$</div>
<div class="t" style="right:521.30px;top:610.47px;font-size:14px;color:#1e1e1e;font-weight:normal;transform:scaleX(1.0138);transform-origin:right;-webkit-text-stroke:0.1px #1e1e1e">1.25</div>
<svg class="b" style="left:940.00px;top:610.02px" width="12" height="12" viewBox="0 0 12 12"><rect x="0" y="0" width="12" height="12" rx="2" fill="#1a73e8"/><path d="M2.6 6.2 L5 8.6 L9.6 3.4" fill="none" stroke="#fff" stroke-width="1.9"/></svg>
<div class="b" style="left:242.00px;top:659.18px;width:1200.00px;height:1.00px;background:#f0f0f0"></div>
<svg class="b" style="left:252.00px;top:638.70px" width="17.4" height="17.6" viewBox="0 0 17.4 17.6"><path d="M0.4 1.6 Q0.4 0.6 1.4 0.6 H7.2 L16.6 10.2 Q17 10.6 16.6 11 L10.8 16.8 Q10.4 17.2 10 16.8 L0.4 7.4 Z" fill="#b7b7b7"/><circle cx="3.6" cy="3.6" r="1.3" fill="#fff"/></svg>
<div class="t" style="left:283.60px;top:638.84px;font-size:14.6px;color:#1c63ae;font-weight:normal;transform:scaleX(0.9603);transform-origin:left;-webkit-text-stroke:0.5px #1c63ae">Almond Milk</div>
<div class="t" style="right:744.70px;top:638.55px;font-size:14px;color:#1e1e1e;font-weight:normal;transform:scaleX(1.0138);transform-origin:right;-webkit-text-stroke:0.1px #1e1e1e">50</div>
<div class="t" style="left:1007.20px;top:638.55px;font-size:14px;color:#1e1e1e;font-weight:normal;transform:scaleX(1.0600);transform-origin:left;-webkit-text-stroke:0.1px #1e1e1e">Milk</div>
<div class="t" style="left:1201.80px;top:638.55px;font-size:14px;color:#1e1e1e;font-weight:normal;transform:scaleX(0.9109);transform-origin:left;-webkit-text-stroke:0.1px #1e1e1e">Yes</div>
<div class="b" style="left:814.30px;top:633.60px;width:113.10px;height:24.30px;background:#fff;border:1px solid #c0c0c0;border-radius:1px"></div>
<div class="t" style="left:820.60px;top:638.55px;font-size:14px;color:#777;font-weight:normal;transform:scaleX(1.0138);transform-origin:left;">$</div>
<div class="t" style="right:521.30px;top:638.55px;font-size:14px;color:#1e1e1e;font-weight:normal;transform:scaleX(1.0138);transform-origin:right;-webkit-text-stroke:0.1px #1e1e1e">0.75</div>
<svg class="b" style="left:940.00px;top:638.10px" width="12" height="12" viewBox="0 0 12 12"><rect x="0" y="0" width="12" height="12" rx="2" fill="#1a73e8"/><path d="M2.6 6.2 L5 8.6 L9.6 3.4" fill="none" stroke="#fff" stroke-width="1.9"/></svg>
<div class="b" style="left:242.00px;top:687.26px;width:1200.00px;height:1.00px;background:#f0f0f0"></div>
<svg class="b" style="left:252.00px;top:666.78px" width="17.4" height="17.6" viewBox="0 0 17.4 17.6"><path d="M0.4 1.6 Q0.4 0.6 1.4 0.6 H7.2 L16.6 10.2 Q17 10.6 16.6 11 L10.8 16.8 Q10.4 17.2 10 16.8 L0.4 7.4 Z" fill="#b7b7b7"/><circle cx="3.6" cy="3.6" r="1.3" fill="#fff"/></svg>
<div class="t" style="left:283.60px;top:666.92px;font-size:14.6px;color:#1c63ae;font-weight:normal;transform:scaleX(0.9603);transform-origin:left;-webkit-text-stroke:0.5px #1c63ae">Almond Milk Carton</div>
<div class="t" style="right:744.70px;top:666.63px;font-size:14px;color:#1e1e1e;font-weight:normal;transform:scaleX(1.0138);transform-origin:right;-webkit-text-stroke:0.1px #1e1e1e">16</div>
<div class="t" style="left:1201.80px;top:666.63px;font-size:14px;color:#1e1e1e;font-weight:normal;transform:scaleX(0.9109);transform-origin:left;-webkit-text-stroke:0.1px #1e1e1e">Yes</div>
<div class="b" style="left:814.30px;top:661.68px;width:113.10px;height:24.30px;background:#fff;border:1px solid #c0c0c0;border-radius:1px"></div>
<div class="t" style="left:820.60px;top:666.63px;font-size:14px;color:#777;font-weight:normal;transform:scaleX(1.0138);transform-origin:left;">$</div>
<div class="t" style="right:521.30px;top:666.63px;font-size:14px;color:#1e1e1e;font-weight:normal;transform:scaleX(1.0138);transform-origin:right;-webkit-text-stroke:0.1px #1e1e1e">6.00</div>
<svg class="b" style="left:940.00px;top:666.18px" width="12" height="12" viewBox="0 0 12 12"><rect x="0" y="0" width="12" height="12" rx="2" fill="#1a73e8"/><path d="M2.6 6.2 L5 8.6 L9.6 3.4" fill="none" stroke="#fff" stroke-width="1.9"/></svg>
<div class="b" style="left:242.00px;top:715.34px;width:1200.00px;height:1.00px;background:#f0f0f0"></div>
<svg class="b" style="left:252.00px;top:694.86px" width="17.4" height="17.6" viewBox="0 0 17.4 17.6"><path d="M0.4 1.6 Q0.4 0.6 1.4 0.6 H7.2 L16.6 10.2 Q17 10.6 16.6 11 L10.8 16.8 Q10.4 17.2 10 16.8 L0.4 7.4 Z" fill="#b7b7b7"/><circle cx="3.6" cy="3.6" r="1.3" fill="#fff"/></svg>
<div class="t" style="left:283.60px;top:695.00px;font-size:14.6px;color:#1c63ae;font-weight:normal;transform:scaleX(0.9603);transform-origin:left;-webkit-text-stroke:0.5px #1c63ae">AmericanoLarge</div>
<div class="t" style="right:744.70px;top:694.71px;font-size:14px;color:#1e1e1e;font-weight:normal;transform:scaleX(1.0138);transform-origin:right;-webkit-text-stroke:0.1px #1e1e1e">49</div>
<div class="t" style="left:1007.20px;top:694.71px;font-size:14px;color:#1e1e1e;font-weight:normal;transform:scaleX(1.0267);transform-origin:left;-webkit-text-stroke:0.1px #1e1e1e">Hot Drinks</div>
<div class="t" style="left:1201.80px;top:694.71px;font-size:14px;color:#1e1e1e;font-weight:normal;transform:scaleX(0.9109);transform-origin:left;-webkit-text-stroke:0.1px #1e1e1e">Yes</div>
<div class="b" style="left:814.30px;top:689.76px;width:113.10px;height:24.30px;background:#fff;border:1px solid #c0c0c0;border-radius:1px"></div>
<div class="t" style="left:820.60px;top:694.71px;font-size:14px;color:#777;font-weight:normal;transform:scaleX(1.0138);transform-origin:left;">$</div>
<div class="t" style="right:521.30px;top:694.71px;font-size:14px;color:#1e1e1e;font-weight:normal;transform:scaleX(1.0138);transform-origin:right;-webkit-text-stroke:0.1px #1e1e1e">3.25</div>
<svg class="b" style="left:940.00px;top:694.26px" width="12" height="12" viewBox="0 0 12 12"><rect x="0" y="0" width="12" height="12" rx="2" fill="#1a73e8"/><path d="M2.6 6.2 L5 8.6 L9.6 3.4" fill="none" stroke="#fff" stroke-width="1.9"/></svg>
<div class="b" style="left:242.00px;top:743.42px;width:1200.00px;height:1.00px;background:#f0f0f0"></div>
<svg class="b" style="left:252.00px;top:722.94px" width="17.4" height="17.6" viewBox="0 0 17.4 17.6"><path d="M0.4 1.6 Q0.4 0.6 1.4 0.6 H7.2 L16.6 10.2 Q17 10.6 16.6 11 L10.8 16.8 Q10.4 17.2 10 16.8 L0.4 7.4 Z" fill="#b7b7b7"/><circle cx="3.6" cy="3.6" r="1.3" fill="#fff"/></svg>
<div class="t" style="left:283.60px;top:723.08px;font-size:14.6px;color:#1c63ae;font-weight:normal;transform:scaleX(0.9603);transform-origin:left;-webkit-text-stroke:0.5px #1c63ae">AmericanoSmall</div>
<div class="t" style="right:744.70px;top:722.79px;font-size:14px;color:#1e1e1e;font-weight:normal;transform:scaleX(1.0138);transform-origin:right;-webkit-text-stroke:0.1px #1e1e1e">50</div>
<div class="t" style="left:1007.20px;top:722.79px;font-size:14px;color:#1e1e1e;font-weight:normal;transform:scaleX(1.0267);transform-origin:left;-webkit-text-stroke:0.1px #1e1e1e">Hot Drinks</div>
<div class="t" style="left:1201.80px;top:722.79px;font-size:14px;color:#1e1e1e;font-weight:normal;transform:scaleX(0.9109);transform-origin:left;-webkit-text-stroke:0.1px #1e1e1e">Yes</div>
<div class="b" style="left:814.30px;top:717.84px;width:113.10px;height:24.30px;background:#fff;border:1px solid #c0c0c0;border-radius:1px"></div>
<div class="t" style="left:820.60px;top:722.79px;font-size:14px;color:#777;font-weight:normal;transform:scaleX(1.0138);transform-origin:left;">$</div>
<div class="t" style="right:521.30px;top:722.79px;font-size:14px;color:#1e1e1e;font-weight:normal;transform:scaleX(1.0138);transform-origin:right;-webkit-text-stroke:0.1px #1e1e1e">3.00</div>
<svg class="b" style="left:940.00px;top:722.34px" width="12" height="12" viewBox="0 0 12 12"><rect x="0" y="0" width="12" height="12" rx="2" fill="#1a73e8"/><path d="M2.6 6.2 L5 8.6 L9.6 3.4" fill="none" stroke="#fff" stroke-width="1.9"/></svg>
<div class="b" style="left:242.00px;top:771.50px;width:1200.00px;height:1.00px;background:#f0f0f0"></div>
<svg class="b" style="left:252.00px;top:751.02px" width="17.4" height="17.6" viewBox="0 0 17.4 17.6"><path d="M0.4 1.6 Q0.4 0.6 1.4 0.6 H7.2 L16.6 10.2 Q17 10.6 16.6 11 L10.8 16.8 Q10.4 17.2 10 16.8 L0.4 7.4 Z" fill="#b7b7b7"/><circle cx="3.6" cy="3.6" r="1.3" fill="#fff"/></svg>
<div class="t" style="left:283.60px;top:751.16px;font-size:14.6px;color:#1c63ae;font-weight:normal;transform:scaleX(0.9603);transform-origin:left;-webkit-text-stroke:0.5px #1c63ae">Animal Crackers</div>
<div class="t" style="right:744.70px;top:750.87px;font-size:14px;color:#1e1e1e;font-weight:normal;transform:scaleX(1.0138);transform-origin:right;-webkit-text-stroke:0.1px #1e1e1e">2</div>
<div class="t" style="left:1007.20px;top:750.87px;font-size:14px;color:#1e1e1e;font-weight:normal;transform:scaleX(0.9062);transform-origin:left;-webkit-text-stroke:0.1px #1e1e1e">Snacks</div>
<div class="t" style="left:1201.80px;top:750.87px;font-size:14px;color:#1e1e1e;font-weight:normal;transform:scaleX(0.9109);transform-origin:left;-webkit-text-stroke:0.1px #1e1e1e">Yes</div>
<div class="b" style="left:814.30px;top:745.92px;width:113.10px;height:24.30px;background:#fff;border:1px solid #c0c0c0;border-radius:1px"></div>
<div class="t" style="left:820.60px;top:750.87px;font-size:14px;color:#777;font-weight:normal;transform:scaleX(1.0138);transform-origin:left;">$</div>
<div class="t" style="right:521.30px;top:750.87px;font-size:14px;color:#1e1e1e;font-weight:normal;transform:scaleX(1.0138);transform-origin:right;-webkit-text-stroke:0.1px #1e1e1e">0.50</div>
<svg class="b" style="left:940.00px;top:750.42px" width="12" height="12" viewBox="0 0 12 12"><rect x="0" y="0" width="12" height="12" rx="2" fill="#1a73e8"/><path d="M2.6 6.2 L5 8.6 L9.6 3.4" fill="none" stroke="#fff" stroke-width="1.9"/></svg>
<div class="b" style="left:242.00px;top:799.58px;width:1200.00px;height:1.00px;background:#f0f0f0"></div>
<svg class="b" style="left:252.00px;top:779.10px" width="17.4" height="17.6" viewBox="0 0 17.4 17.6"><path d="M0.4 1.6 Q0.4 0.6 1.4 0.6 H7.2 L16.6 10.2 Q17 10.6 16.6 11 L10.8 16.8 Q10.4 17.2 10 16.8 L0.4 7.4 Z" fill="#b7b7b7"/><circle cx="3.6" cy="3.6" r="1.3" fill="#fff"/></svg>
<div class="t" style="left:283.60px;top:779.24px;font-size:14.6px;color:#1c63ae;font-weight:normal;transform:scaleX(0.9603);transform-origin:left;-webkit-text-stroke:0.5px #1c63ae">Apple Cider Caramel Large</div>
<div class="t" style="right:744.70px;top:778.95px;font-size:14px;color:#1e1e1e;font-weight:normal;transform:scaleX(1.0138);transform-origin:right;-webkit-text-stroke:0.1px #1e1e1e">50</div>
<div class="t" style="left:1007.20px;top:778.95px;font-size:14px;color:#1e1e1e;font-weight:normal;transform:scaleX(0.9952);transform-origin:left;-webkit-text-stroke:0.1px #1e1e1e">Apple Cider</div>
<div class="t" style="left:1201.80px;top:778.95px;font-size:14px;color:#1e1e1e;font-weight:normal;transform:scaleX(0.9109);transform-origin:left;-webkit-text-stroke:0.1px #1e1e1e">Yes</div>
<div class="b" style="left:814.30px;top:774.00px;width:113.10px;height:24.30px;background:#fff;border:1px solid #c0c0c0;border-radius:1px"></div>
<div class="t" style="left:820.60px;top:778.95px;font-size:14px;color:#777;font-weight:normal;transform:scaleX(1.0138);transform-origin:left;">$</div>
<div class="t" style="right:521.30px;top:778.95px;font-size:14px;color:#1e1e1e;font-weight:normal;transform:scaleX(1.0138);transform-origin:right;-webkit-text-stroke:0.1px #1e1e1e">2.75</div>
<svg class="b" style="left:940.00px;top:778.50px" width="12" height="12" viewBox="0 0 12 12"><rect x="0" y="0" width="12" height="12" rx="2" fill="#1a73e8"/><path d="M2.6 6.2 L5 8.6 L9.6 3.4" fill="none" stroke="#fff" stroke-width="1.9"/></svg>
<div class="b" style="left:242.00px;top:827.66px;width:1200.00px;height:1.00px;background:#f0f0f0"></div>
<svg class="b" style="left:252.00px;top:807.18px" width="17.4" height="17.6" viewBox="0 0 17.4 17.6"><path d="M0.4 1.6 Q0.4 0.6 1.4 0.6 H7.2 L16.6 10.2 Q17 10.6 16.6 11 L10.8 16.8 Q10.4 17.2 10 16.8 L0.4 7.4 Z" fill="#b7b7b7"/><circle cx="3.6" cy="3.6" r="1.3" fill="#fff"/></svg>
<div class="t" style="left:283.60px;top:807.32px;font-size:14.6px;color:#1c63ae;font-weight:normal;transform:scaleX(0.9603);transform-origin:left;-webkit-text-stroke:0.5px #1c63ae">Apple Cider Caramel Small</div>
<div class="t" style="right:744.70px;top:807.03px;font-size:14px;color:#1e1e1e;font-weight:normal;transform:scaleX(1.0138);transform-origin:right;-webkit-text-stroke:0.1px #1e1e1e">50</div>
<div class="t" style="left:1007.20px;top:807.03px;font-size:14px;color:#1e1e1e;font-weight:normal;transform:scaleX(0.9952);transform-origin:left;-webkit-text-stroke:0.1px #1e1e1e">Apple Cider</div>
<div class="t" style="left:1201.80px;top:807.03px;font-size:14px;color:#1e1e1e;font-weight:normal;transform:scaleX(0.9109);transform-origin:left;-webkit-text-stroke:0.1px #1e1e1e">Yes</div>
<div class="b" style="left:814.30px;top:802.08px;width:113.10px;height:24.30px;background:#fff;border:1px solid #c0c0c0;border-radius:1px"></div>
<div class="t" style="left:820.60px;top:807.03px;font-size:14px;color:#777;font-weight:normal;transform:scaleX(1.0138);transform-origin:left;">$</div>
<div class="t" style="right:521.30px;top:807.03px;font-size:14px;color:#1e1e1e;font-weight:normal;transform:scaleX(1.0138);transform-origin:right;-webkit-text-stroke:0.1px #1e1e1e">2.50</div>
<svg class="b" style="left:940.00px;top:806.58px" width="12" height="12" viewBox="0 0 12 12"><rect x="0" y="0" width="12" height="12" rx="2" fill="#1a73e8"/><path d="M2.6 6.2 L5 8.6 L9.6 3.4" fill="none" stroke="#fff" stroke-width="1.9"/></svg>
<div class="b" style="left:242.00px;top:855.74px;width:1200.00px;height:1.00px;background:#f0f0f0"></div>
<svg class="b" style="left:252.00px;top:835.26px" width="17.4" height="17.6" viewBox="0 0 17.4 17.6"><path d="M0.4 1.6 Q0.4 0.6 1.4 0.6 H7.2 L16.6 10.2 Q17 10.6 16.6 11 L10.8 16.8 Q10.4 17.2 10 16.8 L0.4 7.4 Z" fill="#b7b7b7"/><circle cx="3.6" cy="3.6" r="1.3" fill="#fff"/></svg>
<div class="t" style="left:283.60px;top:835.40px;font-size:14.6px;color:#1c63ae;font-weight:normal;transform:scaleX(0.9603);transform-origin:left;-webkit-text-stroke:0.5px #1c63ae">Apple Cider Cinnamon Large</div>
<div class="t" style="right:744.70px;top:835.11px;font-size:14px;color:#1e1e1e;font-weight:normal;transform:scaleX(1.0138);transform-origin:right;-webkit-text-stroke:0.1px #1e1e1e">50</div>
<div class="t" style="left:1007.20px;top:835.11px;font-size:14px;color:#1e1e1e;font-weight:normal;transform:scaleX(0.9952);transform-origin:left;-webkit-text-stroke:0.1px #1e1e1e">Apple Cider</div>
<div class="t" style="left:1201.80px;top:835.11px;font-size:14px;color:#1e1e1e;font-weight:normal;transform:scaleX(0.9109);transform-origin:left;-webkit-text-stroke:0.1px #1e1e1e">Yes</div>
<div class="b" style="left:814.30px;top:830.16px;width:113.10px;height:24.30px;background:#fff;border:1px solid #c0c0c0;border-radius:1px"></div>
<div class="t" style="left:820.60px;top:835.11px;font-size:14px;color:#777;font-weight:normal;transform:scaleX(1.0138);transform-origin:left;">$</div>
<div class="t" style="right:521.30px;top:835.11px;font-size:14px;color:#1e1e1e;font-weight:normal;transform:scaleX(1.0138);transform-origin:right;-webkit-text-stroke:0.1px #1e1e1e">2.75</div>
<svg class="b" style="left:940.00px;top:834.66px" width="12" height="12" viewBox="0 0 12 12"><rect x="0" y="0" width="12" height="12" rx="2" fill="#1a73e8"/><path d="M2.6 6.2 L5 8.6 L9.6 3.4" fill="none" stroke="#fff" stroke-width="1.9"/></svg>
<div class="b" style="left:242.00px;top:883.82px;width:1200.00px;height:1.00px;background:#f0f0f0"></div>
<svg class="b" style="left:252.00px;top:863.34px" width="17.4" height="17.6" viewBox="0 0 17.4 17.6"><path d="M0.4 1.6 Q0.4 0.6 1.4 0.6 H7.2 L16.6 10.2 Q17 10.6 16.6 11 L10.8 16.8 Q10.4 17.2 10 16.8 L0.4 7.4 Z" fill="#b7b7b7"/><circle cx="3.6" cy="3.6" r="1.3" fill="#fff"/></svg>
<div class="t" style="left:283.60px;top:863.48px;font-size:14.6px;color:#1c63ae;font-weight:normal;transform:scaleX(0.9603);transform-origin:left;-webkit-text-stroke:0.5px #1c63ae">Apple Cider Cinnamon Small</div>
<div class="t" style="right:744.70px;top:863.19px;font-size:14px;color:#1e1e1e;font-weight:normal;transform:scaleX(1.0138);transform-origin:right;-webkit-text-stroke:0.1px #1e1e1e">50</div>
<div class="t" style="left:1007.20px;top:863.19px;font-size:14px;color:#1e1e1e;font-weight:normal;transform:scaleX(0.9952);transform-origin:left;-webkit-text-stroke:0.1px #1e1e1e">Apple Cider</div>
<div class="t" style="left:1201.80px;top:863.19px;font-size:14px;color:#1e1e1e;font-weight:normal;transform:scaleX(0.9109);transform-origin:left;-webkit-text-stroke:0.1px #1e1e1e">Yes</div>
<div class="b" style="left:814.30px;top:858.24px;width:113.10px;height:24.30px;background:#fff;border:1px solid #c0c0c0;border-radius:1px"></div>
<div class="t" style="left:820.60px;top:863.19px;font-size:14px;color:#777;font-weight:normal;transform:scaleX(1.0138);transform-origin:left;">$</div>
<div class="t" style="right:521.30px;top:863.19px;font-size:14px;color:#1e1e1e;font-weight:normal;transform:scaleX(1.0138);transform-origin:right;-webkit-text-stroke:0.1px #1e1e1e">2.50</div>
<svg class="b" style="left:940.00px;top:862.74px" width="12" height="12" viewBox="0 0 12 12"><rect x="0" y="0" width="12" height="12" rx="2" fill="#1a73e8"/><path d="M2.6 6.2 L5 8.6 L9.6 3.4" fill="none" stroke="#fff" stroke-width="1.9"/></svg>
<div class="b" style="left:242.00px;top:911.90px;width:1200.00px;height:1.00px;background:#f0f0f0"></div>
<svg class="b" style="left:252.00px;top:891.42px" width="17.4" height="17.6" viewBox="0 0 17.4 17.6"><path d="M0.4 1.6 Q0.4 0.6 1.4 0.6 H7.2 L16.6 10.2 Q17 10.6 16.6 11 L10.8 16.8 Q10.4 17.2 10 16.8 L0.4 7.4 Z" fill="#b7b7b7"/><circle cx="3.6" cy="3.6" r="1.3" fill="#fff"/></svg>
<div class="t" style="left:283.60px;top:891.56px;font-size:14.6px;color:#1c63ae;font-weight:normal;transform:scaleX(0.9603);transform-origin:left;-webkit-text-stroke:0.5px #1c63ae">Apple Cider Plain Large</div>
<div class="t" style="right:744.70px;top:891.27px;font-size:14px;color:#1e1e1e;font-weight:normal;transform:scaleX(1.0138);transform-origin:right;-webkit-text-stroke:0.1px #1e1e1e">50</div>
<div class="t" style="left:1007.20px;top:891.27px;font-size:14px;color:#1e1e1e;font-weight:normal;transform:scaleX(0.9952);transform-origin:left;-webkit-text-stroke:0.1px #1e1e1e">Apple Cider</div>
<div class="t" style="left:1201.80px;top:891.27px;font-size:14px;color:#1e1e1e;font-weight:normal;transform:scaleX(0.9109);transform-origin:left;-webkit-text-stroke:0.1px #1e1e1e">Yes</div>
<div class="b" style="left:814.30px;top:886.32px;width:113.10px;height:24.30px;background:#fff;border:1px solid #c0c0c0;border-radius:1px"></div>
<div class="t" style="left:820.60px;top:891.27px;font-size:14px;color:#777;font-weight:normal;transform:scaleX(1.0138);transform-origin:left;">$</div>
<div class="t" style="right:521.30px;top:891.27px;font-size:14px;color:#1e1e1e;font-weight:normal;transform:scaleX(1.0138);transform-origin:right;-webkit-text-stroke:0.1px #1e1e1e">2.25</div>
<svg class="b" style="left:940.00px;top:890.82px" width="12" height="12" viewBox="0 0 12 12"><rect x="0" y="0" width="12" height="12" rx="2" fill="#1a73e8"/><path d="M2.6 6.2 L5 8.6 L9.6 3.4" fill="none" stroke="#fff" stroke-width="1.9"/></svg>
<div class="b" style="left:242.00px;top:939.98px;width:1200.00px;height:1.00px;background:#f0f0f0"></div>
<svg class="b" style="left:252.00px;top:919.50px" width="17.4" height="17.6" viewBox="0 0 17.4 17.6"><path d="M0.4 1.6 Q0.4 0.6 1.4 0.6 H7.2 L16.6 10.2 Q17 10.6 16.6 11 L10.8 16.8 Q10.4 17.2 10 16.8 L0.4 7.4 Z" fill="#b7b7b7"/><circle cx="3.6" cy="3.6" r="1.3" fill="#fff"/></svg>
<div class="t" style="left:283.60px;top:919.64px;font-size:14.6px;color:#1c63ae;font-weight:normal;transform:scaleX(0.9603);transform-origin:left;-webkit-text-stroke:0.5px #1c63ae">Apple Cider Plain Small</div>
<div class="t" style="right:744.70px;top:919.35px;font-size:14px;color:#1e1e1e;font-weight:normal;transform:scaleX(1.0138);transform-origin:right;-webkit-text-stroke:0.1px #1e1e1e">50</div>
<div class="t" style="left:1007.20px;top:919.35px;font-size:14px;color:#1e1e1e;font-weight:normal;transform:scaleX(0.9952);transform-origin:left;-webkit-text-stroke:0.1px #1e1e1e">Apple Cider</div>
<div class="t" style="left:1201.80px;top:919.35px;font-size:14px;color:#1e1e1e;font-weight:normal;transform:scaleX(0.9109);transform-origin:left;-webkit-text-stroke:0.1px #1e1e1e">Yes</div>
<div class="b" style="left:814.30px;top:914.40px;width:113.10px;height:24.30px;background:#fff;border:1px solid #c0c0c0;border-radius:1px"></div>
<div class="t" style="left:820.60px;top:919.35px;font-size:14px;color:#777;font-weight:normal;transform:scaleX(1.0138);transform-origin:left;">$</div>
<div class="t" style="right:521.30px;top:919.35px;font-size:14px;color:#1e1e1e;font-weight:normal;transform:scaleX(1.0138);transform-origin:right;-webkit-text-stroke:0.1px #1e1e1e">1.50</div>
<svg class="b" style="left:940.00px;top:918.90px" width="12" height="12" viewBox="0 0 12 12"><rect x="0" y="0" width="12" height="12" rx="2" fill="#1a73e8"/><path d="M2.6 6.2 L5 8.6 L9.6 3.4" fill="none" stroke="#fff" stroke-width="1.9"/></svg>
<div class="b" style="left:242.00px;top:968.06px;width:1200.00px;height:1.00px;background:#f0f0f0"></div>
<svg class="b" style="left:252.00px;top:947.58px" width="17.4" height="17.6" viewBox="0 0 17.4 17.6"><path d="M0.4 1.6 Q0.4 0.6 1.4 0.6 H7.2 L16.6 10.2 Q17 10.6 16.6 11 L10.8 16.8 Q10.4 17.2 10 16.8 L0.4 7.4 Z" fill="#b7b7b7"/><circle cx="3.6" cy="3.6" r="1.3" fill="#fff"/></svg>
<div class="b" style="left:814.30px;top:942.48px;width:113.10px;height:24.30px;background:#fff;border:1px solid #c0c0c0;border-radius:1px"></div>
<svg class="b" style="left:940.00px;top:946.98px" width="12" height="12" viewBox="0 0 12 12"><rect x="0" y="0" width="12" height="12" rx="2" fill="#1a73e8"/><path d="M2.6 6.2 L5 8.6 L9.6 3.4" fill="none" stroke="#fff" stroke-width="1.9"/></svg>
<div class="b" style="left:242.00px;top:947.00px;width:1200.00px;height:1.00px;background:#141414"></div></body></html>
